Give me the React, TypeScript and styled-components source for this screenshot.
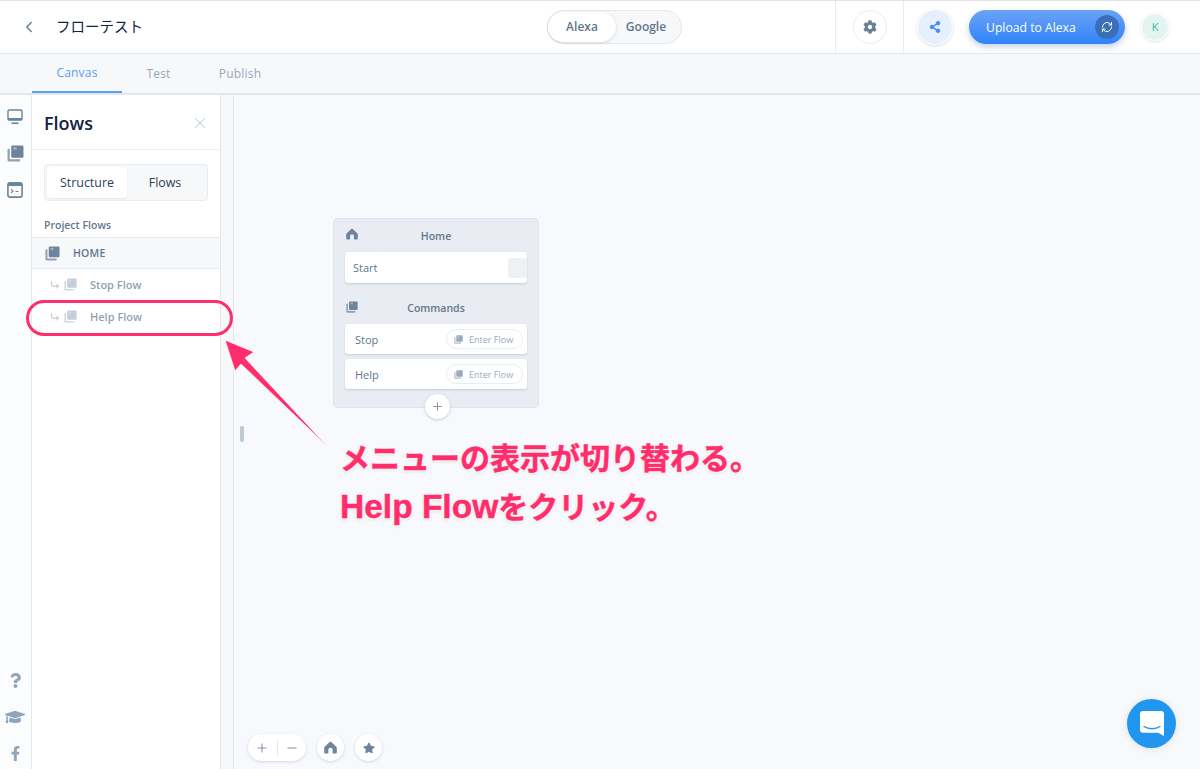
import styled, { createGlobalStyle } from "styled-components"
import { ChevronLeft, X, Plus, Minus, RefreshCw, CornerDownRight } from "lucide-react"
import { FaCog, FaShareAlt, FaStar, FaQuestion, FaGraduationCap, FaFacebookF } from "react-icons/fa"

const Global = createGlobalStyle`
    html, body { margin: 0; padding: 0; height: 100%; overflow: hidden; }
    body {
        font-family: "Open Sans", "Noto Sans CJK JP", sans-serif;
        color: #62778c;
    }
    * { box-sizing: border-box; }
`

const Page = styled.div`
    position: relative;
    width: 1200px;
    height: 769px;
    display: flex;
    flex-direction: column;
    overflow: hidden;
    background: #fff;
`

const Header = styled.header`
    height: 54px;
    flex: none;
    display: grid;
    grid-template-columns: 547px 135px 1fr 68px 297px;
    align-items: stretch;
    border-top: 1px solid #e2e4e6;
    border-bottom: 1px solid #e3e8ec;
`
const TitleBlock = styled.div`
    display: flex;
    align-items: center;
    padding-left: 20px;
    gap: 18px;
    color: #6b7f93;
`
const Title = styled.div`
    font-size: 14.5px;
    color: #132144;
    padding-bottom: 3px;
`
const Platforms = styled.div`
    align-self: center;
    height: 34px;
    border-radius: 17px;
    background: #f6f8fa;
    border: 1px solid #e3e8ec;
    display: flex;
    align-items: center;
`
const Platform = styled.div<{ $on?: boolean }>`
    width: ${p => (p.$on ? "68px" : "60px")};
    height: 30px;
    border-radius: 15px;
    display: flex;
    align-items: center;
    justify-content: center;
    font-size: 12px;
    font-weight: 600;
    color: #62778c;
    padding-bottom: 2px;
    background: ${p => (p.$on ? "#fff" : "transparent")};
    box-shadow: ${p => (p.$on ? "0 1px 3px rgba(100,120,140,.25)" : "none")};
`
const SettingsCell = styled.div`
    display: flex;
    align-items: center;
    justify-content: center;
    border-left: 1px solid #e8edf1;
`
const RoundButton = styled.div<{ $active?: boolean }>`
    width: 34px;
    height: 34px;
    border-radius: 50%;
    display: flex;
    align-items: center;
    justify-content: center;
    background: ${p => (p.$active ? "#e6effd" : "#fff")};
    border: ${p => (p.$active ? "none" : "1px solid #e8edf1")};
    box-shadow: ${p => (p.$active ? "0 0 0 1px #fff, 0 1px 3px 1px rgba(100,120,140,.25)" : "none")};
    color: ${p => (p.$active ? "#4a90ec" : "#6b7f93")};
`
const UploadCell = styled.div`
    display: flex;
    align-items: center;
    gap: 17px;
    padding-left: 14px;
    border-left: 1px solid #e8edf1;
`
const Upload = styled.div`
    width: 156px;
    height: 34px;
    border-radius: 17px;
    background: linear-gradient(180deg, #6ba3f5 0%, #2f83fb 100%);
    box-shadow: 0 3px 6px rgba(70, 110, 170, .3);
    color: #fff;
    font-size: 12.2px;
    display: flex;
    align-items: center;
    justify-content: space-between;
    padding: 0 6px 0 17px;
`
const SyncDot = styled.div`
    width: 24px;
    height: 24px;
    border-radius: 50%;
    background: #3a6fb8;
    display: flex;
    align-items: center;
    justify-content: center;
`
const Avatar = styled.div`
    width: 26px;
    height: 26px;
    border-radius: 50%;
    background: #e4f4f1;
    box-shadow: 0 0 0 1px #fff, 0 1px 3px 1px rgba(100,120,140,.2);
    color: #3bb59c;
    font-size: 11px;
    display: flex;
    align-items: center;
    justify-content: center;
    padding-bottom: 2px;
`

const Tabs = styled.nav`
    height: 41px;
    flex: none;
    background: #f6f8fa;
    border-bottom: 2px solid #e3e6ea;
    display: flex;
    padding-left: 32px;
`
const Tab = styled.div<{ $on?: boolean; $w: number }>`
    width: ${p => p.$w}px;
    height: 39px;
    font-size: 12px;
    letter-spacing: .2px;
    display: flex;
    align-items: center;
    justify-content: center;
    color: ${p => (p.$on ? "#5d9cf5" : "#98a9bb")};
    border-bottom: ${p => (p.$on ? "2px solid #5d9cf5" : "none")};
    margin-bottom: -1px;
`

const Main = styled.main`
    flex: 1;
    display: flex;
    min-height: 0;
`
const Rail = styled.aside`
    width: 32px;
    flex: none;
    border-right: 1px solid #e3e8ec;
    background: #fbfcfd;
    display: flex;
    flex-direction: column;
    align-items: center;
    color: #6d849c;
    padding: 14px 1px 0 0;
`
const RailTop = styled.div`
    display: flex;
    flex-direction: column;
    align-items: center;
    gap: 20px;
    flex: 1;
`
const RailBottom = styled.div`
    display: flex;
    flex-direction: column;
    align-items: center;
    gap: 19px;
    color: #8fa5bc;
    padding-bottom: 8px;
`

const Panel = styled.section`
    width: 189px;
    flex: none;
    background: #fff;
    border-right: 1px solid #e3e8ec;
`
const PanelHead = styled.div`
    height: 55px;
    display: flex;
    align-items: center;
    justify-content: space-between;
    padding: 5px 11px 3px 12px;
    border-bottom: 1px solid #eef1f4;
    color: #c0cedb;
`
const PanelTitle = styled.div`
    font-size: 18px;
    font-weight: 600;
    color: #132144;
`
const Segments = styled.div`
    margin: 14px 12px 0;
    height: 37px;
    display: flex;
    background: #f6f8fa;
    border: 1px solid #e8ecf0;
    border-radius: 4px;
    padding: 2px;
`
const Segment = styled.div<{ $on?: boolean }>`
    width: ${p => (p.$on ? "80px" : "76px")};
    display: flex;
    align-items: center;
    justify-content: center;
    font-size: 12.4px;
    color: #2d4159;
    padding-bottom: 1px;
    background: ${p => (p.$on ? "#fff" : "transparent")};
    border-radius: 3px;
    box-shadow: ${p => (p.$on ? "0 1px 2px rgba(100,120,140,.12)" : "none")};
`
const SectionLabel = styled.div`
    font-size: 10.5px;
    font-weight: 600;
    color: #62778c;
    padding: 17px 0 0 12px;
    height: 36px;
`
const HomeRow = styled.div`
    height: 32px;
    display: flex;
    align-items: center;
    gap: 13px;
    padding-left: 13px;
    background: #f6f8fa;
    border-top: 1px solid #e6eaee;
    border-bottom: 1px solid #e6eaee;
    font-size: 10.5px;
    font-weight: 600;
    color: #62778c;
    letter-spacing: .2px;
`
const FlowRow = styled.div`
    height: 32px;
    display: flex;
    align-items: center;
    gap: 4px;
    padding: 0 0 1px 18px;
    color: #9fb0c1;
    font-size: 11px;
    font-weight: 600;
`
const FlowName = styled.span`
    color: #8fa1b4;
    margin-left: 9px;
`

const Gutter = styled.div`
    width: 13px;
    flex: none;
    background: #f7f8fa;
    border-right: 1px solid #e3e8ec;
`
const Handle = styled.div`
    position: absolute;
    left: 6px;
    top: 331px;
    width: 4px;
    height: 16px;
    border-radius: 2px;
    background: #bcc8d3;
`

const Canvas = styled.div`
    flex: 1;
    position: relative;
    background: #f7f9fc;
`
const Node = styled.div`
    position: absolute;
    left: 99px;
    top: 123px;
    width: 206px;
    height: 190px;
    border-radius: 5px;
    background: #e9ecf2;
    border: 1px solid #dfe4ea;
    box-shadow: 0 0 0 1px #f7f9fc;
    padding: 0 11px;
`
const NodeHead = styled.div<{ $tall?: boolean }>`
    position: relative;
    height: ${p => (p.$tall ? "38px" : "33px")};
    display: flex;
    align-items: center;
    justify-content: center;
    font-size: 10.5px;
    font-weight: 600;
    color: #62778c;
    padding-top: ${p => (p.$tall ? "6px" : "0")};
`
const NodeIcon = styled.span<{ $low?: boolean }>`
    position: absolute;
    left: 1px;
    top: ${p => (p.$low ? "15px" : "9px")};
    color: #6d849c;
    display: flex;
`
const Step = styled.div`
    height: 30px;
    background: #fff;
    border-radius: 3px;
    box-shadow: 0 1px 2px rgba(100,120,140,.25);
    display: flex;
    align-items: center;
    justify-content: space-between;
    font-size: 11px;
    color: #62778c;
    padding: 0 4px 0 10px;
    margin-bottom: 5px;
`
const StartStep = styled(Step)`
    height: 31px;
    padding: 0 0 0 8px;
    margin-bottom: 3px;
`
const StartSlot = styled.div`
    width: 19px;
    height: 20px;
    background: #eef0f4;
    border-radius: 3px 0 0 3px;
`
const EnterFlow = styled.div`
    width: 77px;
    height: 20px;
    border: 1px solid #e8edf1;
    border-radius: 10px;
    display: flex;
    align-items: center;
    gap: 6px;
    padding-left: 7px;
    font-size: 9px;
    color: #98a9bb;
`
const AddStep = styled.div`
    position: absolute;
    left: 91px;
    bottom: -12px;
    width: 25px;
    height: 25px;
    border-radius: 50%;
    background: #fff;
    box-shadow: 0 1px 3px rgba(100,120,140,.35);
    color: #6b7f93;
    display: flex;
    align-items: center;
    justify-content: center;
`
const Controls = styled.div`
    position: absolute;
    left: 14px;
    bottom: 8px;
    display: flex;
    gap: 11px;
`
const ZoomPill = styled.div`
    width: 58px;
    height: 27px;
    border-radius: 14px;
    background: #fff;
    box-shadow: 0 1px 3px rgba(100,120,140,.25);
    color: #6d849c;
    display: flex;
    align-items: center;
    justify-content: space-evenly;
`
const ZoomLine = styled.div`
    width: 1px;
    height: 14px;
    background: #e3e8ec;
`
const ControlDot = styled.div`
    width: 27px;
    height: 27px;
    border-radius: 50%;
    background: #fff;
    box-shadow: 0 1px 3px rgba(100,120,140,.25);
    color: #6d849c;
    display: flex;
    align-items: center;
    justify-content: center;
`
const Chat = styled.div`
    position: absolute;
    right: 24px;
    bottom: 21px;
    width: 49px;
    height: 49px;
    border-radius: 50%;
    background: #2196f0;
    box-shadow: 0 1px 8px rgba(0,0,0,.1);
    display: flex;
    align-items: center;
    justify-content: center;
`

const Oval = styled.div`
    position: absolute;
    left: 26px;
    top: 300px;
    width: 207px;
    height: 36px;
    border: 3px solid #ff2d6b;
    border-radius: 18px;
    box-shadow: 0 0 0 1px rgba(255,255,255,.7);
`
const Arrow = styled.svg`
    position: absolute;
    left: 220px;
    top: 335px;
`
const Note = styled.div`
    position: absolute;
    left: 340px;
    top: 435px;
    font-family: "Liberation Sans", "Noto Sans CJK JP", sans-serif;
    font-size: 30px;
    line-height: 48px;
    font-weight: 700;
    color: #ff2d6b;
    white-space: nowrap;
    -webkit-text-stroke: .5px #ff2d6b;
    text-shadow: 0 0 2px #fff, 0 0 2px #fff, 1px 1px 2px #fff, -1px 1px 2px #fff, 0 1px 3px rgba(120,120,120,.5);
`
const NoteLatin = styled.span`
    font-size: 33.5px;
`

function Layers({ size = 14, tone = "currentColor" }: { size?: number; tone?: string }) {
    return (
        <svg width={size} height={size} viewBox="0 0 16 16" fill={tone}>
            <rect x="4" y="0.5" width="11.5" height="11.5" rx="1.2" />
            <rect x="6" y="2" width="3" height="2.5" fill="#fff" opacity=".35" />
            <path d="M2.6 3.5v9.9h9.9v1.1a1 1 0 0 1-1 1H2a1.5 1.5 0 0 1-1.5-1.5V4.5a1 1 0 0 1 1-1z" opacity=".75" />
        </svg>
    )
}

function HomeGlyph({ size = 12 }: { size?: number }) {
    return (
        <svg width={size} height={size} viewBox="0 0 12 12" fill="currentColor">
            <path d="M6 .6a1 1 0 0 1 .7.3l4.600 4.300c.3.3.5.7.5 1.100v4.200a1 1 0 0 1-1 1H8V8.200a2 2 0 0 0-4 0V11.500H1.200a1 1 0 0 1-1-1V6.300c0-.4.2-.8.5-1.100L5.300.9A1 1 0 0 1 6 .6z" />
        </svg>
    )
}

function Monitor() {
    return (
        <svg width="16" height="16" viewBox="0 0 16 16" fill="none" stroke="currentColor">
            <rect x="1" y="1" width="14" height="10" rx="1.2" strokeWidth="1.4" />
            <rect x="1" y="9" width="14" height="2.2" fill="currentColor" stroke="none" />
            <path d="M4.5 14.2h7" strokeWidth="1.6" />
        </svg>
    )
}

function Console() {
    return (
        <svg width="16" height="16" viewBox="0 0 16 16" fill="none" stroke="currentColor">
            <rect x="0.9" y="0.9" width="14.2" height="14.2" rx="2" strokeWidth="1.6" />
            <rect x="1" y="1" width="14" height="3" fill="currentColor" stroke="none" />
            <path d="M4 7.5l2 1.7-2 1.7M8.5 9.500h3" strokeWidth="1.100" />
        </svg>
    )
}

function ChatGlyph() {
    return (
        <svg width="24" height="25" viewBox="0 0 24 25">
            <path d="M3 0h18a3 3 0 0 1 3 3v22l-6-3.2H3a3 3 0 0 1-3-3V3a3 3 0 0 1 3-3z" fill="#fff" />
            <path d="M4 15.500c4.500 3 11.500 3 16 0" fill="none" stroke="#2196f0" strokeWidth="1.300" strokeLinecap="round" />
        </svg>
    )
}

export default function App() {
    return (
        <Page>
            <Global />
            <Header>
                <TitleBlock>
                    <ChevronLeft size={18} strokeWidth={2} />
                    <Title>フローテスト</Title>
                </TitleBlock>
                <Platforms>
                    <Platform $on>Alexa</Platform>
                    <Platform>Google</Platform>
                </Platforms>
                <div />
                <SettingsCell>
                    <RoundButton><FaCog size={14} /></RoundButton>
                </SettingsCell>
                <UploadCell>
                    <RoundButton $active><FaShareAlt size={12} /></RoundButton>
                    <Upload>
                        Upload to Alexa
                        <SyncDot><RefreshCw size={12} color="#fff" strokeWidth={2} /></SyncDot>
                    </Upload>
                    <Avatar>K</Avatar>
                </UploadCell>
            </Header>
            <Tabs>
                <Tab $on $w={90}>Canvas</Tab>
                <Tab $w={73}>Test</Tab>
                <Tab $w={90}>Publish</Tab>
            </Tabs>
            <Main>
                <Rail>
                    <RailTop>
                        <Monitor />
                        <Layers size={17} />
                        <Console />
                    </RailTop>
                    <RailBottom>
                        <FaQuestion size={15} />
                        <FaGraduationCap size={20} />
                        <FaFacebookF size={15} />
                    </RailBottom>
                </Rail>
                <Panel>
                    <PanelHead>
                        <PanelTitle>Flows</PanelTitle>
                        <X size={18} strokeWidth={1.4} />
                    </PanelHead>
                    <Segments>
                        <Segment $on>Structure</Segment>
                        <Segment>Flows</Segment>
                    </Segments>
                    <SectionLabel>Project Flows</SectionLabel>
                    <HomeRow><Layers size={15} tone="#6d849c" />HOME</HomeRow>
                    <FlowRow>
                        <CornerDownRight size={10} strokeWidth={1.8} />
                        <Layers size={13} tone="#c3ced9" />
                        <FlowName>Stop Flow</FlowName>
                    </FlowRow>
                    <FlowRow>
                        <CornerDownRight size={10} strokeWidth={1.8} />
                        <Layers size={13} tone="#c3ced9" />
                        <FlowName>Help Flow</FlowName>
                    </FlowRow>
                </Panel>
                <Gutter />
                <Canvas>
                    <Handle />
                    <Node>
                        <NodeHead>
                            <NodeIcon><HomeGlyph /></NodeIcon>
                            Home
                        </NodeHead>
                        <StartStep>Start<StartSlot /></StartStep>
                        <NodeHead $tall>
                            <NodeIcon $low><Layers size={12} /></NodeIcon>
                            Commands
                        </NodeHead>
                        <Step>
                            Stop
                            <EnterFlow><Layers size={9} />Enter Flow</EnterFlow>
                        </Step>
                        <Step>
                            Help
                            <EnterFlow><Layers size={9} />Enter Flow</EnterFlow>
                        </Step>
                        <AddStep><Plus size={13} strokeWidth={1.5} /></AddStep>
                    </Node>
                    <Controls>
                        <ZoomPill>
                            <Plus size={14} strokeWidth={1.5} />
                            <ZoomLine />
                            <Minus size={14} strokeWidth={1.5} />
                        </ZoomPill>
                        <ControlDot><HomeGlyph size={13} /></ControlDot>
                        <ControlDot><FaStar size={12} /></ControlDot>
                    </Controls>
                    <Chat><ChatGlyph /></Chat>
                </Canvas>
            </Main>
            <Oval />
            <Arrow width="120" height="125" viewBox="220 335 120 125">
                <path d="M225 340l29 12-9 6 85 91-89-85-6 7z" fill="#ff2d6b" stroke="#fff" strokeWidth=".8" />
            </Arrow>
            <Note>
                メニューの表示が切り替わる。<br />
                <NoteLatin>Help Flow</NoteLatin>をクリック。
            </Note>
        </Page>
    )
}
